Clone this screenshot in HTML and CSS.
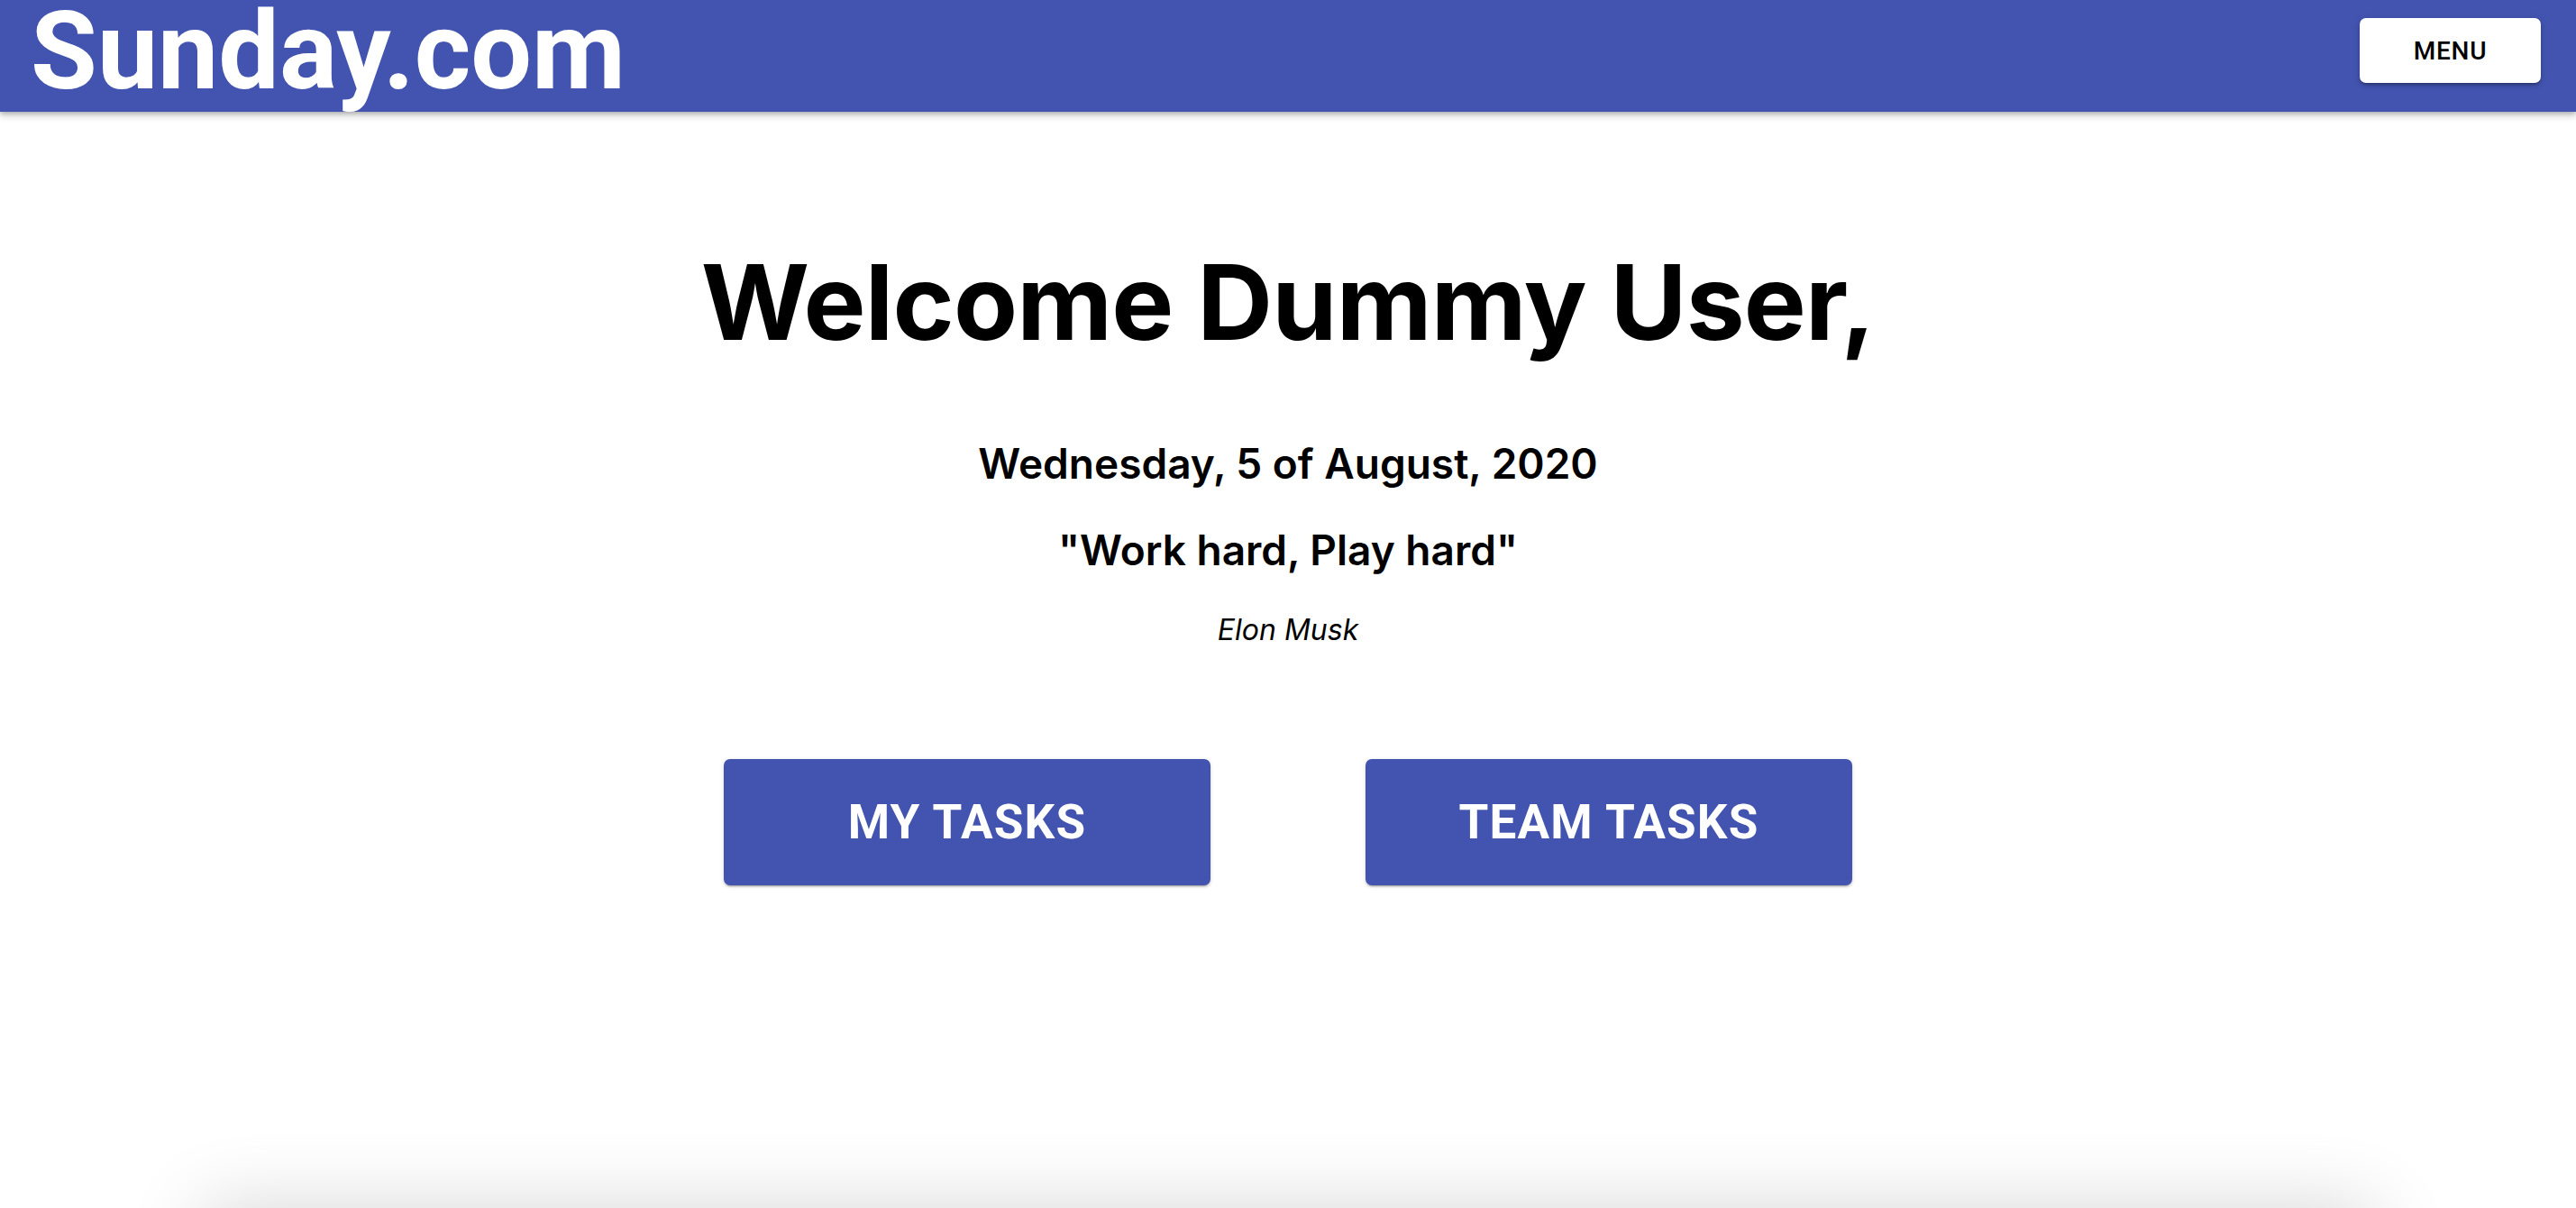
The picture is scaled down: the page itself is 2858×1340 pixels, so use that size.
FILE: index.html
```html
<!DOCTYPE html>
<html lang="en">
<head>
<meta charset="utf-8">
<title>Sunday.com</title>
<link rel="stylesheet" href="styles.css">
</head>
<body>
<div class="page">
  <header class="appbar">
    <div class="brand">Sunday.com</div>
    <button class="menu-btn">MENU</button>
  </header>
  <main class="home">
    <h1 class="welcome">Welcome Dummy User,</h1>
    <h2 class="date">Wednesday, 5 of August, 2020</h2>
    <h3 class="quote">"Work hard, Play hard"</h3>
    <p class="author">Elon Musk</p>
    <div class="actions">
      <button class="task-btn">MY TASKS</button>
      <button class="task-btn">TEAM TASKS</button>
    </div>
    <section class="panel"></section>
  </main>
</div>
</body>
</html>
```

FILE: styles.css
```css
html, body {
  margin: 0;
  padding: 0;
  height: 100%;
  overflow: hidden;
  background: #ffffff;
}

.page {
  display: flex;
  flex-direction: column;
  min-height: 100%;
}

.appbar {
  position: relative;
  z-index: 2;
  height: 124px;
  box-sizing: border-box;
  background: #4254b0;
  display: flex;
  justify-content: space-between;
  align-items: flex-start;
  padding: 0 39px 0 34px;
  box-shadow: 0 4px 8px rgba(0, 0, 0, 0.22), 0 2px 4px rgba(0, 0, 0, 0.14);
}

.brand {
  margin-top: -13px;
  font-family: Roboto, "Liberation Sans", sans-serif;
  font-weight: 700;
  font-size: 120px;
  line-height: 140px;
  color: #ffffff;
  letter-spacing: 0;
  white-space: nowrap;
}

.menu-btn {
  margin-top: 20px;
  width: 201px;
  height: 72px;
  border: none;
  border-radius: 7px;
  background: #ffffff;
  color: #000000;
  font-family: Roboto, "Liberation Sans", sans-serif;
  font-weight: 500;
  font-size: 28px;
  letter-spacing: 0.8px;
  box-shadow: 0 3px 3px -2px rgba(0,0,0,0.25), 0 3px 4px rgba(0,0,0,0.16), 0 1px 8px rgba(0,0,0,0.12);
  cursor: pointer;
}

.home {
  display: flex;
  flex-direction: column;
  align-items: center;
  font-family: Inter, "Liberation Sans", sans-serif;
  color: #000000;
}

.welcome {
  margin: 142px 0 0;
  font-size: 116px;
  line-height: 1.2;
  font-weight: 700;
  letter-spacing: -0.8px;
}

.date {
  margin: 82px 0 0;
  font-size: 46px;
  line-height: 1.2;
  font-weight: 600;
}

.quote {
  margin: 41px 0 0;
  font-size: 46px;
  line-height: 1.2;
  font-weight: 600;
}

.author {
  margin: 41px 0 0;
  font-size: 32px;
  line-height: 1.2;
  font-style: italic;
  font-weight: 400;
}

.actions {
  margin-top: 124px;
  display: flex;
  gap: 172px;
}

.task-btn {
  width: 540px;
  height: 140px;
  border: none;
  border-radius: 7px;
  background: #4254b0;
  color: #ffffff;
  font-family: Roboto, "Liberation Sans", sans-serif;
  font-weight: 700;
  font-size: 53px;
  letter-spacing: 1.2px;
  box-shadow: 0 3px 1px -2px rgba(0,0,0,0.2), 0 2px 2px rgba(0,0,0,0.14), 0 1px 5px rgba(0,0,0,0.12);
  cursor: pointer;
}

.panel {
  margin-top: 363px;
  width: 2398px;
  height: 400px;
  background: #ffffff;
  box-shadow: 0 0 80px 6px rgba(0, 0, 0, 0.16);
}
```
